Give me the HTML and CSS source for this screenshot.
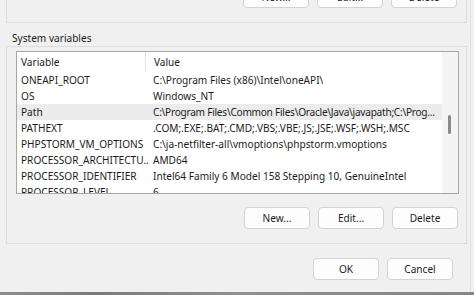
FILE: index.html
```html
<!DOCTYPE html>
<html lang="en">
<head>
    <meta charset="UTF-8">
    <title>Environment Variables</title>
    <link rel="stylesheet" href="styles.css">
</head>
<body>
    <div class="window">
        <!-- User variables group (scrolled off the top) -->
        <div class="group group-top">
            <div class="button-row">
                <button class="btn">New...</button>
                <button class="btn">Edit...</button>
                <button class="btn">Delete</button>
            </div>
        </div>

        <div class="group-label">System variables</div>

        <!-- System variables group -->
        <div class="group group-system">
            <div class="listbox">
                <div class="list-body">
                    <div class="list-head">
                        <div class="head-name">Variable</div>
                        <div class="head-value">Value</div>
                    </div>
                    <div class="row"><div class="cell-name">ONEAPI_ROOT</div><div class="cell-value">C:\Program Files (x86)\Intel\oneAPI\</div></div>
                    <div class="row"><div class="cell-name">OS</div><div class="cell-value">Windows_NT</div></div>
                    <div class="row selected"><div class="cell-name">Path</div><div class="cell-value long">C:\Program Files\Common Files\Oracle\Java\javapath;C:\Prog...</div></div>
                    <div class="row"><div class="cell-name">PATHEXT</div><div class="cell-value">.COM;.EXE;.BAT;.CMD;.VBS;.VBE;.JS;.JSE;.WSF;.WSH;.MSC</div></div>
                    <div class="row"><div class="cell-name">PHPSTORM_VM_OPTIONS</div><div class="cell-value">C:\ja-netfilter-all\vmoptions\phpstorm.vmoptions</div></div>
                    <div class="row"><div class="cell-name">PROCESSOR_ARCHITECTU...</div><div class="cell-value">AMD64</div></div>
                    <div class="row"><div class="cell-name">PROCESSOR_IDENTIFIER</div><div class="cell-value">Intel64 Family 6 Model 158 Stepping 10, GenuineIntel</div></div>
                    <div class="row"><div class="cell-name">PROCESSOR_LEVEL</div><div class="cell-value">6</div></div>
                </div>
                <div class="scrollbar">
                    <div class="thumb"></div>
                </div>
            </div>
            <div class="button-row">
                <button class="btn">New...</button>
                <button class="btn">Edit...</button>
                <button class="btn">Delete</button>
            </div>
        </div>

        <div class="dialog-buttons">
            <button class="btn">OK</button>
            <button class="btn">Cancel</button>
        </div>
    </div>
    <div class="taskbar"></div>
</body>
</html>
```

FILE: styles.css
```css
body {
    margin: 0;
    width: 474px;
    height: 295px;
    overflow: hidden;
    background: #f0f0f0;
    font-family: "Noto Sans", "Open Sans", sans-serif;
    font-size: 10.1px;
    color: #1b1b1b;
}

.window {
    width: 471px;
    height: 292px;
    box-sizing: border-box;
    padding: 0 3px 0 6px;
    border-right: 1px solid #e2e2e2;
    display: flex;
    flex-direction: column;
}

.group {
    border: 1px solid #dcdcdc;
    background: #f0f0f0;
}

.group-top {
    border-top: none;
    height: 23px;
    box-sizing: border-box;
    display: flex;
    flex-direction: column;
    justify-content: flex-end;
    padding: 0 9px 14px 0;
}

.button-row {
    display: flex;
    justify-content: flex-end;
    gap: 8px;
}

.btn {
    width: 66px;
    height: 22px;
    padding: 0;
    background: #fdfdfd;
    border: 1px solid #d3d3d3;
    border-radius: 4px;
    font-family: "Noto Sans", "Open Sans", sans-serif;
    font-size: 10.1px;
    color: #1b1b1b;
    line-height: 18px;
}

.group-label {
    padding: 8px 0 0 6px;
    height: 15px;
    line-height: 15px;
}

.group-system {
    height: 198px;
    box-sizing: border-box;
    padding: 4px 7px 0 9px;
}

.listbox {
    height: 143px;
    box-sizing: border-box;
    border: 1px solid #a6a6a6;
    background: #fff;
    display: flex;
    overflow: hidden;
}

.list-body {
    flex: 1;
    overflow: hidden;
}

.list-head {
    display: flex;
    height: 20px;
    line-height: 20px;
}

.head-name {
    width: 124px;
    padding-left: 4px;
    border-right: 1px solid #e3e3e3;
}

.head-value {
    padding-left: 8px;
}

.row {
    display: flex;
    height: 16px;
    line-height: 16px;
    white-space: nowrap;
}

.row.selected {
    background: #ececec;
}

.cell-name {
    width: 128px;
    padding-left: 4px;
    flex-shrink: 0;
    overflow: hidden;
}

.cell-value {
    padding-left: 4px;
    overflow: hidden;
}

/* value trimmed by the list view, keep the ellipsis in view */
.cell-value.long {
    letter-spacing: -0.25px;
}

.scrollbar {
    width: 16px;
    flex-shrink: 0;
    background: #f4f4f4;
    padding-top: 63px;
    box-sizing: border-box;
}

.thumb {
    width: 3px;
    height: 19px;
    margin-left: 6px;
    background: #8a8a8a;
    border-radius: 2px;
}

.group-system .button-row {
    margin-top: 13px;
    padding-right: 1px;
}

.dialog-buttons {
    display: flex;
    justify-content: flex-end;
    gap: 8px;
    margin-top: 14px;
    padding-right: 14px;
}

.taskbar {
    height: 3px;
    background: linear-gradient(90deg, #8d8d8d, #7a7a7a 20%, #909090 50%, #858585);
}
```
